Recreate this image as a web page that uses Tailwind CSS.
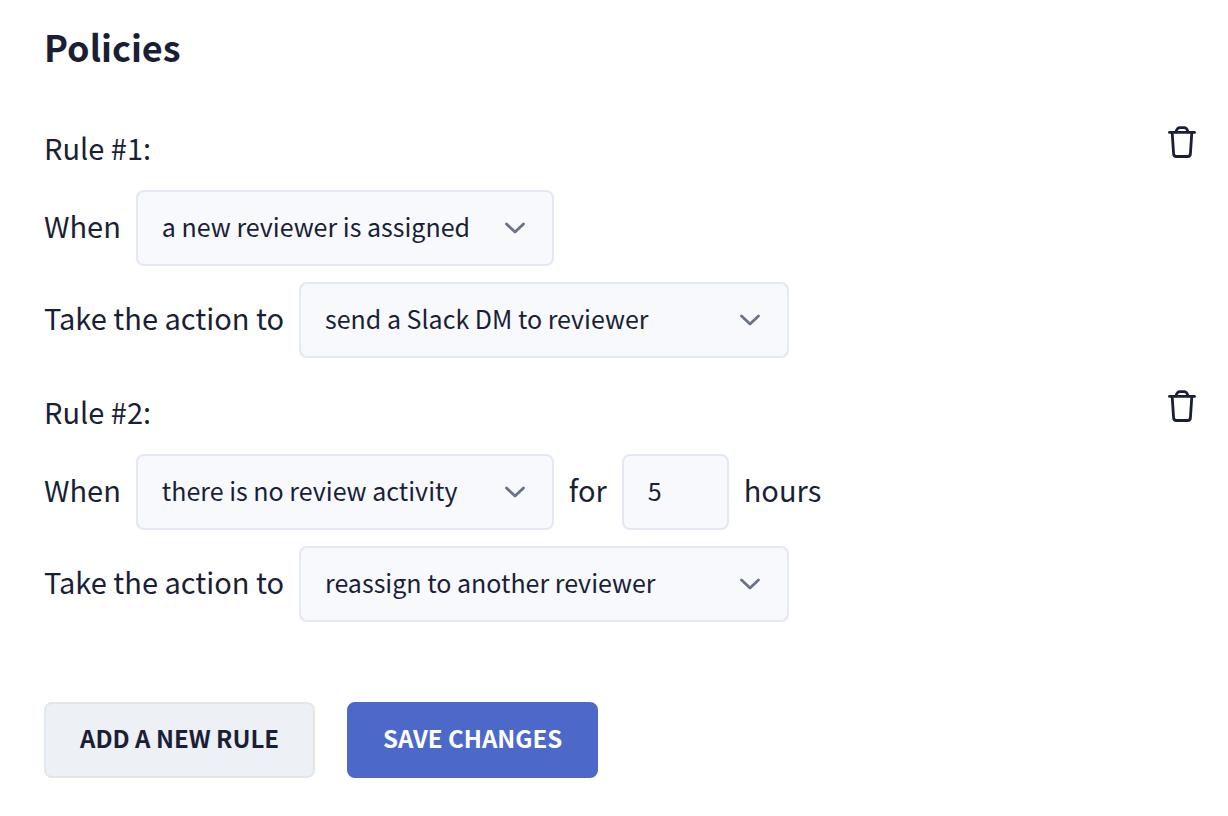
<!DOCTYPE html>
<html lang="en">
<head>
<meta charset="utf-8">
<meta name="viewport" content="width=device-width, initial-scale=1">
<title>Policies</title>
<script src="https://cdn.jsdelivr.net/npm/@tailwindcss/browser@4"></script>
</head>
<body class="bg-white font-['Noto_Sans_CJK_JP',sans-serif] text-[29px] leading-[42px] text-[#1a1f36]">
<svg class="hidden">
  <symbol id="chevron" viewBox="0 0 24 16"><path d="M3.500 4 12 12 20.500 4" fill="none" stroke="currentColor" stroke-width="2.800" stroke-linecap="round" stroke-linejoin="round"/></symbol>
  <symbol id="trash" viewBox="0 0 28 34"><g fill="none" stroke="currentColor" stroke-width="2.800" stroke-linecap="round" stroke-linejoin="round"><path d="M1.500 6.400H26.500"/><path d="M8 6C8.600 3.200 10 1.600 12 1.600h4C18 1.600 19.400 3.200 20 6"/><path d="M4.200 6.800 5.600 27.800Q5.800 30.500 8.500 30.500H19.500Q22.200 30.500 22.400 27.800L23.800 6.800"/></g></symbol>
</svg>
<main class="px-11 pt-5 pb-9">
  <h1 class="pb-1 text-4xl leading-[52px] font-bold">Policies</h1>
  <form class="mt-[50px]">
    <div class="flex flex-col gap-8">
      <section class="flex flex-col gap-4">
        <div class="-mr-3 flex items-start justify-between">
          <h2 class="pb-1.5">Rule #1:</h2>
          <button type="button" aria-label="Delete rule 1" class="block"><svg class="h-[34px] w-7"><use href="#trash"/></svg></button>
        </div>
        <div class="flex items-center gap-[15px]">
          <label for="when1" class="pb-1.5">When</label>
          <div class="relative">
            <select id="when1" class="h-[76px] w-[418px] appearance-none rounded-lg border-2 border-[#e3e8f1] bg-[#f7f9fd] px-6 pb-1 text-[25px]"><option>a new reviewer is assigned</option></select>
            <svg class="pointer-events-none absolute top-[30px] right-[27px] h-4 w-6 text-[#697386]"><use href="#chevron"/></svg>
          </div>
        </div>
        <div class="flex items-center gap-[15px]">
          <label for="action1" class="pb-1.5">Take the action to</label>
          <div class="relative">
            <select id="action1" class="h-[76px] w-[490px] appearance-none rounded-lg border-2 border-[#e3e8f1] bg-[#f7f9fd] px-6 pb-1 text-[25px]"><option>send a Slack DM to reviewer</option></select>
            <svg class="pointer-events-none absolute top-[30px] right-[27px] h-4 w-6 text-[#697386]"><use href="#chevron"/></svg>
          </div>
        </div>
      </section>
      <section class="flex flex-col gap-4">
        <div class="-mr-3 flex items-start justify-between">
          <h2 class="pb-1.5">Rule #2:</h2>
          <button type="button" aria-label="Delete rule 2" class="block"><svg class="h-[34px] w-7"><use href="#trash"/></svg></button>
        </div>
        <div class="flex items-center gap-[15px]">
          <label for="when2" class="pb-1.5">When</label>
          <div class="relative">
            <select id="when2" class="h-[76px] w-[418px] appearance-none rounded-lg border-2 border-[#e3e8f1] bg-[#f7f9fd] px-6 pb-1 text-[25px]"><option>there is no review activity</option></select>
            <svg class="pointer-events-none absolute top-[30px] right-[27px] h-4 w-6 text-[#697386]"><use href="#chevron"/></svg>
          </div>
          <label for="hours" class="pb-1.5">for</label>
          <input id="hours" type="text" inputmode="numeric" value="5" class="h-[76px] w-[107px] rounded-lg border-2 border-[#e3e8f1] bg-[#f7f9fd] px-6 pb-1 text-[25px]">
          <span class="pb-1.5">hours</span>
        </div>
        <div class="flex items-center gap-[15px]">
          <label for="action2" class="pb-1.5">Take the action to</label>
          <div class="relative">
            <select id="action2" class="h-[76px] w-[490px] appearance-none rounded-lg border-2 border-[#e3e8f1] bg-[#f7f9fd] px-6 pb-1 text-[25px]"><option>reassign to another reviewer</option></select>
            <svg class="pointer-events-none absolute top-[30px] right-[27px] h-4 w-6 text-[#697386]"><use href="#chevron"/></svg>
          </div>
        </div>
      </section>
    </div>
    <div class="mt-20 flex gap-8 text-2xl font-bold">
      <button type="button" class="h-[76px] rounded-lg border-2 border-[#e3e6eb] bg-[#edf0f5] px-[34px] pb-1">ADD A NEW RULE</button>
      <button type="submit" class="h-[76px] rounded-lg border-2 border-[#4c69ca] bg-[#4c69ca] px-[34px] pb-1 text-white">SAVE CHANGES</button>
    </div>
  </form>
</main>
</body>
</html>
